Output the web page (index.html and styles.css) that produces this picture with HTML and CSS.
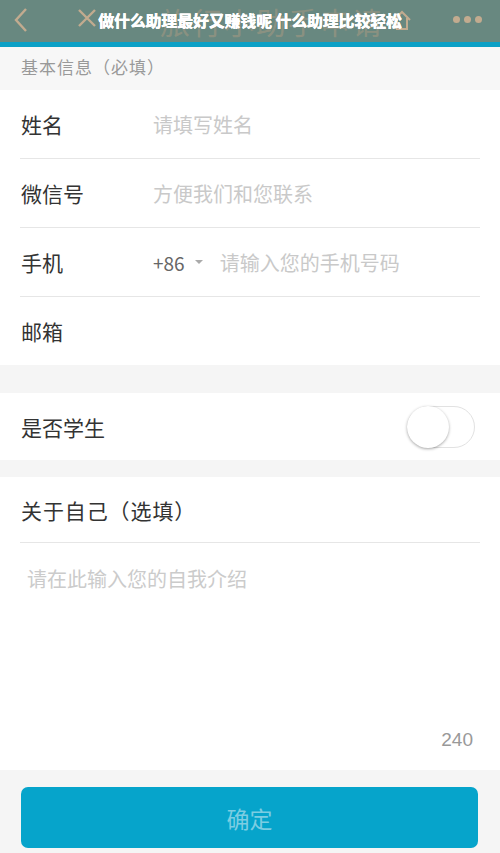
FILE: index.html
```html
<!DOCTYPE html>
<html lang="zh">
<head>
<meta charset="utf-8">
<link rel="stylesheet" href="styles.css">
</head>
<body>
<div class="page">
  <header class="topbar">
    <svg class="ico-back" width="16" height="26" viewBox="0 0 16 26"><path d="M13 2 L3 13 L13 24" fill="none" stroke="#c2ab8f" stroke-width="2.4"/></svg>
    <svg class="ico-close" width="20" height="20" viewBox="0 0 20 20"><path d="M2 2 L18 18 M18 2 L2 18" fill="none" stroke="#c2ab8f" stroke-width="2.4"/></svg>
    <div class="ghost">旅行小助手申请</div>
    <svg class="ico-home" width="20" height="22" viewBox="0 0 20 22"><path d="M2 11 L10 3 L18 11 M5 9 V20 H15 V9" fill="none" stroke="#c2ab8f" stroke-width="2"/></svg>
    <div class="dots"><span></span><span></span><span></span></div>
    <h1 class="title">做什么助理最好又赚钱呢 什么助理比较轻松</h1>
  </header>
  <div class="stripe"></div>
  <div class="section-head">基本信息（必填）</div>
  <div class="group">
    <div class="row"><span class="label">姓名</span><span class="ph">请填写姓名</span></div>
    <div class="row"><span class="label">微信号</span><span class="ph">方便我们和您联系</span></div>
    <div class="row"><span class="label">手机</span><span class="code">+86</span><span class="caret"></span><span class="ph">请输入您的手机号码</span></div>
    <div class="row last"><span class="label">邮箱</span></div>
  </div>
  <div class="gap g1"></div>
  <div class="group">
    <div class="row student"><span class="label">是否学生</span><span class="toggle"><span class="knob"></span></span></div>
  </div>
  <div class="gap g2"></div>
  <div class="group about">
    <div class="about-head">关于自己（选填）</div>
    <div class="textarea">
      <div class="ta-ph">请在此输入您的自我介绍</div>
      <div class="count">240</div>
    </div>
  </div>
  <div class="footer">
    <div class="btn">确定</div>
  </div>
</div>
</body>
</html>
```

FILE: styles.css
```css
* { box-sizing: border-box; margin: 0; padding: 0; }
html, body { width: 500px; height: 853px; overflow: hidden; }
body { font-family: "Noto Sans CJK SC", "Noto Sans", sans-serif; background: #f5f5f5; }
.page { width: 500px; height: 853px; display: flex; flex-direction: column; }

.topbar { position: relative; height: 42px; background: #688880; flex-shrink: 0; }
.ico-back { position: absolute; left: 13px; top: 7px; }
.ico-close { position: absolute; left: 77px; top: 8px; }
.ghost { position: absolute; left: 160px; top: 3px; font-size: 30px; line-height: 36px; color: #b49e83; opacity: 0.45; letter-spacing: 2px; }
.ico-home { position: absolute; left: 392px; top: 9px; }
.dots { position: absolute; left: 453px; top: 16px; display: flex; gap: 4px; }
.dots span { width: 7px; height: 7px; border-radius: 50%; background: #c2ab8f; }
.title { position: absolute; left: 0; right: 0; top: 9px; text-align: center; font-size: 16px; line-height: 22px; font-weight: 900; color: #fff; letter-spacing: -0.2px; text-shadow: 0 0 0.6px #fff; }
.stripe { height: 5px; background: #0ba0c6; flex-shrink: 0; }

.section-head { height: 43px; padding: 8px 0 0 21px; font-size: 17px; line-height: 24px; color: #999; background: #f7f7f7; letter-spacing: 1px; }

.group { background: #fff; }
.row { height: 69px; margin: 0 20px; display: flex; align-items: center; border-bottom: 1.5px solid #e6e6e6; }
.row.last { border-bottom: none; height: 68px; }
.label { font-size: 21px; color: #333; width: 133px; padding-left: 1px; }
.ph { font-size: 20px; color: #c9c9c9; }
.code { font-size: 19px; color: #666; }
.caret { width: 0; height: 0; border-left: 4px solid transparent; border-right: 4px solid transparent; border-top: 4px solid #aaa; margin: 0 17px 0 10px; }

.gap { background: #f5f5f5; }
.g1 { height: 28px; }
.g2 { height: 17px; }

.student { border-bottom: none; height: 67px; justify-content: space-between; }
.student .label { width: auto; }
.toggle { width: 68px; height: 42px; border-radius: 21px; border: 1.5px solid #e2e2e2; background: #fff; display: flex; align-items: center; margin-right: 5px; }
.knob { width: 42px; height: 42px; border-radius: 50%; background: #fff; box-shadow: 0 1px 3px rgba(0,0,0,0.35); margin-left: -1.5px; }

.about-head { height: 66px; margin: 0 20px; display: flex; align-items: center; font-size: 21px; color: #333; border-bottom: 1.5px solid #e6e6e6; padding-left: 1px; letter-spacing: 0.9px; }
.textarea { height: 227px; padding: 22px 27px 0 27px; display: flex; flex-direction: column; }
.ta-ph { font-size: 20px; color: #cbcbcb; line-height: 28px; }
.count { margin-top: auto; margin-bottom: 19px; align-self: flex-end; font-size: 19px; color: #999; font-family: "Liberation Sans", "Noto Sans", sans-serif; }

.footer { flex: 1; padding: 17px 22px 0 21px; background: #f5f5f5; }
.btn { height: 61px; border-radius: 7px; background: #06a4cb; color: #7ccde2; font-size: 23px; display: flex; align-items: center; justify-content: center; }
```
